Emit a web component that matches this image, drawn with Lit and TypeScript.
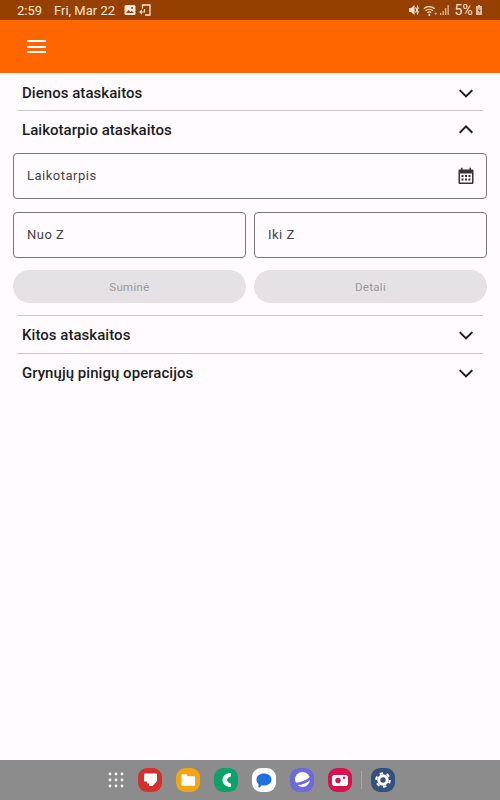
import { LitElement, html, css, svg } from "lit";
import { customElement } from "lit/decorators.js";

const chevDown = html`<svg viewBox="0 0 24 24" width="24" height="24"><path d="M6.400 8.400 12 14l5.600-5.600L19 9.800l-7 7-7-7z" fill="#1c1b1f"/></svg>`;
const chevUp = html`<svg viewBox="0 0 24 24" width="24" height="24"><path d="M6.400 15.400 12 9.800l5.600 5.600L19 14l-7-7-7 7z" fill="#1c1b1f"/></svg>`;

@customElement("app-root")
export class AppRoot extends LitElement {
  static styles = css`
    :host { display: flex; flex-direction: column; width: 500px; height: 800px; background: #fffbfe; font-family: Roboto, "Noto Sans", sans-serif; color: #1c1b1f; overflow: hidden; }
    .status { height: 20px; flex: none; background: #964000; color: #f6e6da; display: flex; align-items: center; padding: 0 17px 0 17px; font-size: 13px; box-sizing: border-box; }
    .status .time { width: 37px; }
    .status .date { margin-right: 9px; }
    .status .spacer { flex: 1; }
    .status svg { display: block; flex: none; }
    .status .pct { font-size: 14px; margin: 0 2px 0 5px; letter-spacing: 0.2px; }
    .ml3 { margin-left: 3px; }
    .appbar { height: 53px; flex: none; background: #ff6600; display: flex; align-items: center; padding: 0 0 0 27px; }
    .menu { display: flex; flex-direction: column; gap: 3.500px; width: 19px; }
    .menu i { display: block; height: 2px; background: #fff; }
    .content { flex: 1; display: flex; flex-direction: column; padding: 0 17px; }
    .row { height: 37px; box-sizing: border-box; padding: 0 5px; display: flex; align-items: center; justify-content: space-between; font-size: 15px; font-weight: 500; letter-spacing: 0.04px; flex: none; }
    .row.first { padding-top: 2px; }
    .row.mid { padding-top: 1px; }
    .divider { height: 1px; background: #cac8cb; flex: none; }
    .panel { margin: 5px -4px 12px; display: flex; flex-direction: column; gap: 13px; }
    .field { border: 1px solid #79767a; border-radius: 4px; box-sizing: border-box; background: #fffbfe; display: flex; align-items: center; justify-content: space-between; padding: 0 11px 0 13px; font-size: 13px; letter-spacing: 0.5px; color: #444346; height: 46px; flex: 1 0 46px; min-width: 0; }
    .field span { margin-top: -1px; }
    .pair { display: flex; gap: 8px; }
    .btns { display: flex; gap: 8px; margin-top: -1px; }
    .btn { flex: 1; height: 33px; border-radius: 17px; background: #e4e2e4; color: #9c9a9d; display: flex; align-items: center; justify-content: center; font-size: 11.500px; letter-spacing: 0.3px; }
    .nav { height: 40px; flex: none; background: #8c8c8c; display: flex; align-items: center; padding: 0 0 0 108px; }
    .nav svg { display: block; flex: none; }
    .ap { margin-right: 14px; }
    .sep { width: 1px; height: 18px; background: #a8a8a8; margin: 0 9px 0 -5px; }
  `;

  render() {
    return html`
      <div class="status">
        <span class="time">2:59</span><span class="date">Fri, Mar 22</span>
        <svg width="12" height="12" viewBox="0 0 12 12"><rect x=".5" y="1" width="11" height="10" rx="1.500" fill="#f6e6da"/><path d="M2 9l2.500-3 1.800 2 1.200-1.200L10 9z" fill="#964000"/><circle cx="8" cy="4" r="1" fill="#964000"/></svg>
        <svg class="ml3" width="12" height="12" viewBox="0 0 12 12"><path d="M3.500 4.500V1h7.500v10H6" fill="none" stroke="#f6e6da" stroke-width="1.300"/><path d="M1 8h4.500V5M3 6l-2 2 2 2" fill="none" stroke="#f6e6da" stroke-width="1.200"/></svg>
        <span class="spacer"></span>
        <svg width="12" height="12" viewBox="0 0 12 12"><path d="M1 4h2l3.500-3v10L3 8H1z" fill="#f6e6da"/><path d="M7.500 3.500l3 5M10.500 3.500l-3 5M9.500 1.500v2M9.500 8.500v2" stroke="#f6e6da" stroke-width="1.300"/></svg>
        <svg class="ml3" width="14" height="13" viewBox="0 0 14 13"><path d="M.8 4.700a8 8 0 0 1 10.900 0M2.600 6.700a5.500 5.500 0 0 1 7.300 0M4.300 8.600a3 3 0 0 1 3.900 0" fill="none" stroke="#f6e6da" stroke-width="1.200"/><circle cx="6.300" cy="10.800" r="1.100" fill="#f6e6da"/><path d="M11.500 9.500h2.500M12.700 8.500v2.500" stroke="#d9bda8" stroke-width=".7"/></svg>
        <svg class="ml3" width="9" height="12" viewBox="0 0 9 12"><rect x="0" y="9" width="1.300" height="2" fill="#d9bda8"/><rect x="2.500" y="7" width="1.300" height="4" fill="#d9bda8"/><rect x="5" y="4" width="1.300" height="7" fill="#d9bda8"/><rect x="7.500" y="1" width="1.300" height="10" fill="#d9bda8"/></svg>
        <span class="pct">5%</span>
        <svg width="8" height="12" viewBox="0 0 8 12"><path d="M3 1h2v1h2v9H1V2h2z" fill="#d9bda8"/><path d="M4.500 3.500 2.800 7h1.400l-.6 2.600L5.600 6H4.200z" fill="#964000"/></svg>
      </div>
      <div class="appbar"><div class="menu"><i></i><i></i><i></i></div></div>
      <div class="content">
        <div class="row first"><span>Dienos ataskaitos</span>${chevDown}</div>
        <div class="divider"></div>
        <div class="row mid"><span>Laikotarpio ataskaitos</span>${chevUp}</div>
        <div class="panel">
          <div class="field"><span>Laikotarpis</span>
            <svg width="18" height="18" viewBox="0 0 18 18"><path d="M4 .8h1.600v1.700h6.800V.8H14v1.700h1.200c.7 0 1.300.6 1.300 1.300v11.900c0 .7-.6 1.300-1.300 1.300H2.800c-.7 0-1.300-.6-1.300-1.300V3.800c0-.7.6-1.300 1.300-1.300H4z" fill="#333235"/><rect x="3" y="6.500" width="12" height="9" fill="#fffbfe"/><g fill="#333235"><rect x="4.500" y="8" width="2" height="2"/><rect x="8" y="8" width="2" height="2"/><rect x="11.500" y="8" width="2" height="2"/><rect x="4.500" y="11.500" width="2" height="2"/><rect x="8" y="11.500" width="2" height="2"/><rect x="11.500" y="11.500" width="2" height="2"/></g></svg>
          </div>
          <div class="pair"><div class="field"><span>Nuo Z</span></div><div class="field"><span>Iki Z</span></div></div>
          <div class="btns"><div class="btn">Suminė</div><div class="btn">Detali</div></div>
        </div>
        <div class="divider"></div>
        <div class="row mid"><span>Kitos ataskaitos</span>${chevDown}</div>
        <div class="divider"></div>
        <div class="row mid"><span>Grynųjų pinigų operacijos</span>${chevDown}</div>
      </div>
      <div class="nav">
        <svg class="ap" width="16" height="16" viewBox="0 0 16 16" fill="#f2f2f2">${[2, 8, 14].flatMap((y) => [2, 8, 14].map((x) => svg`<circle cx=${x} cy=${y} r="1.400"/>`))}</svg>
        <svg class="ap" width="24" height="24" viewBox="0 0 24 24"><rect width="24" height="24" rx="9" fill="#d2302a"/><path d="M7 5.500h11a1 1 0 0 1 1 1v6.500l-4.500 5H11v-2.500H9V13.500H6V6.500a1 1 0 0 1 1-1z" fill="#fff"/></svg>
        <svg class="ap" width="24" height="24" viewBox="0 0 24 24"><rect width="24" height="24" rx="9" fill="#f2a516"/><path d="M5.500 7.500c0-.8.600-1.300 1.300-1.300h3.500l1.500 2h6c.8 0 1.300.6 1.300 1.300v7c0 .8-.6 1.300-1.300 1.300H6.800c-.7 0-1.300-.6-1.300-1.300z" fill="#fff"/></svg>
        <svg class="ap" width="24" height="24" viewBox="0 0 24 24"><rect width="24" height="24" rx="9" fill="#0ca36b"/><path d="M16 5c-4.200.3-7.500 3.200-7.500 7s3.300 6.700 7.500 7c.6 0 1-.4 1-1v-1.800c0-.5-.3-.9-.8-1-1.800-.3-3.100-1.800-3.100-3.200s1.300-2.900 3.100-3.200c.5-.1.800-.5.800-1V6c0-.6-.4-1-1-1z" fill="#fff"/></svg>
        <svg class="ap" width="24" height="24" viewBox="0 0 24 24"><rect width="24" height="24" rx="9" fill="#fff"/><path d="M12 5.500c4.300 0 7.500 2.600 7.500 6s-3.200 6-7.500 6c-.8 0-1.500-.1-2.200-.2L7.500 19.500c-.5.400-1 .1-1-.4v-3.200C5 14.800 4.500 13.200 4.500 11.500c0-3.400 3.200-6 7.500-6z" fill="#1f6fe5"/></svg>
        <svg class="ap" width="24" height="24" viewBox="0 0 24 24"><rect width="24" height="24" rx="9" fill="#6d69d8"/><circle cx="12.500" cy="11.500" r="7.500" fill="#fff"/><path d="M3 14.500c6 .8 12-1.300 17.500-6l.5 2.500c-4 4.500-10 6.500-15.500 6z" fill="#6d69d8"/></svg>
        <svg class="ap" width="24" height="24" viewBox="0 0 24 24"><rect width="24" height="24" rx="9" fill="#d5134f"/><rect x="4" y="7" width="16" height="11" rx="2.800" fill="#fff"/><circle cx="10" cy="12.500" r="2.700" fill="#d5134f"/><circle cx="16" cy="9.800" r="1.200" fill="#d5134f"/></svg>
        <span class="sep"></span>
        <svg width="24" height="24" viewBox="0 0 24 24"><rect width="24" height="24" rx="9" fill="#34507c"/><circle cx="12" cy="12" r="4.200" fill="none" stroke="#fff" stroke-width="3"/><circle cx="12" cy="12" r="6.800" fill="none" stroke="#fff" stroke-width="2" stroke-dasharray="3.500 3.620"/></svg>
      </div>
    `;
  }
}
